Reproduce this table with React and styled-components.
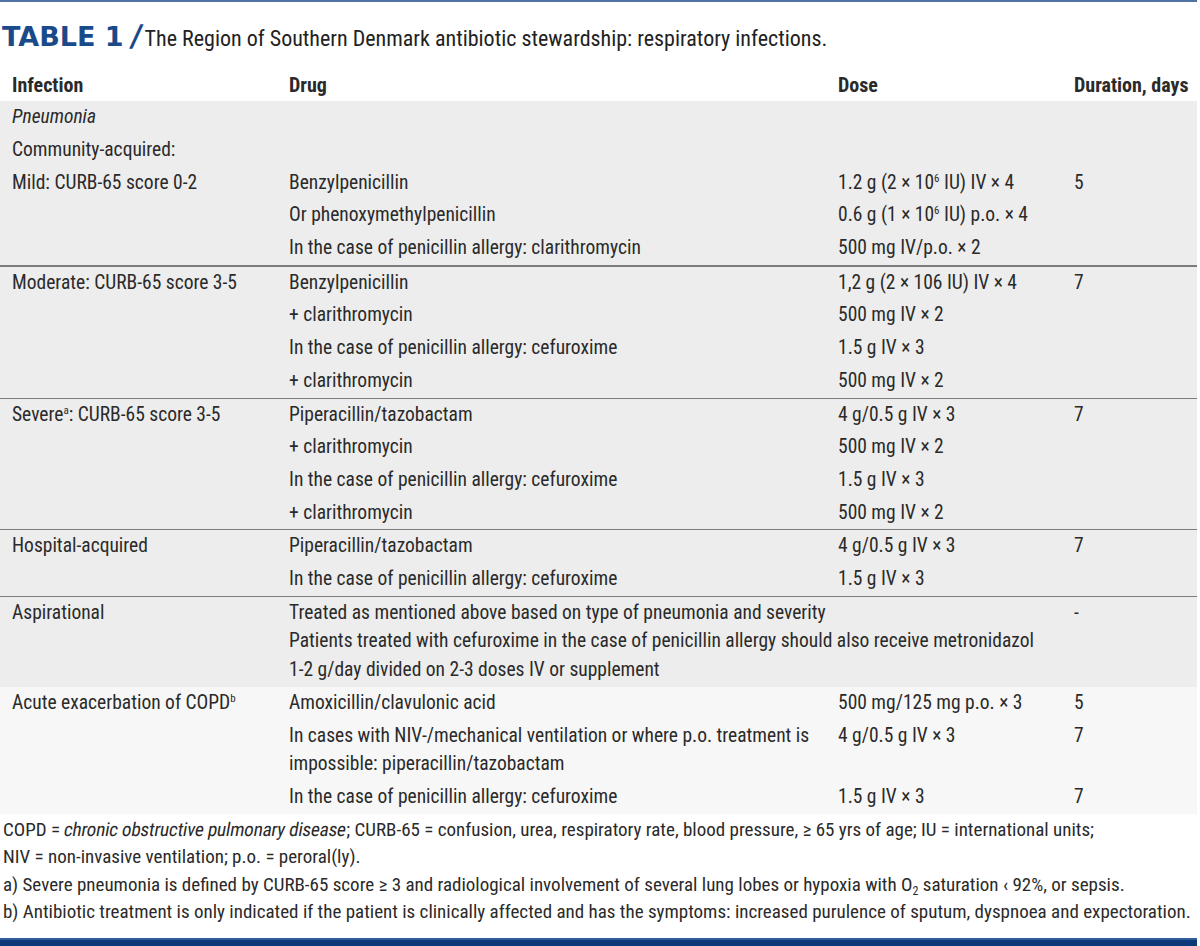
import React from 'react';
import styled, { createGlobalStyle } from 'styled-components';

const GlobalStyle = createGlobalStyle`
  html, body {
    margin: 0;
    padding: 0;
    background: #ffffff;
  }
`;

const Page = styled.div`
  width: 1197px;
  border-top: 2px solid #4f74a4;
  font-family: "Roboto", "DejaVu Sans Condensed", sans-serif;
  font-stretch: 75%;
  font-size: 19.5px;
  color: #2a2a2a;
`;

const TitleBar = styled.div`
  display: flex;
  align-items: baseline;
  margin-top: 19px;
  height: 30px;
  line-height: 30px;
  padding-left: 2px;
  white-space: nowrap;
`;

const TableLabel = styled.span`
  font-family: "DejaVu Sans", sans-serif;
  font-stretch: normal;
  font-weight: 700;
  font-size: 27px;
  color: #1b4a8a;
`;

const Slash = styled.span`
  font-family: "DejaVu Sans", sans-serif;
  font-stretch: normal;
  font-weight: 700;
  font-size: 30px;
  color: #1b4a8a;
  margin: 0 3px 0 7px;
  transform: skewX(-8deg);
  display: inline-block;
`;

const TitleText = styled.span`
  font-size: 22px;
  color: #222;
`;

const Line = styled.div`
  display: grid;
  grid-template-columns: 277px 549px 236px 1fr;
  padding: 2px 0 2px 12px;
  line-height: 28.7px;
  white-space: nowrap;
`;

const HeaderLine = styled(Line)`
  margin-top: 17.5px;
  font-size: 20px;
  font-weight: 700;
`;

const Group = styled.div`
  background: ${({ $light }) => ($light ? '#f7f7f7' : '#ededed')};
  border-bottom: ${({ $border }) => ($border ? `${$border}px solid #7d7d7d` : 'none')};
`;

const Cell = styled.div`
  grid-column: ${({ $span }) => ($span ? `span ${$span}` : 'auto')};
  font-style: ${({ $italic }) => ($italic ? 'italic' : 'normal')};
`;

const Sup = styled.sup`
  font-size: 11px;
  line-height: 0;
  vertical-align: 7px;
`;

const Sub = styled.sub`
  font-size: 12px;
  line-height: 0;
  vertical-align: -4px;
`;

const Footer = styled.div`
  padding: 2px 0 0 3px;
  line-height: 27.5px;
  font-size: 19px;
  white-space: nowrap;
`;

/* condensed upright face slanted, the italic face of the font has no narrow width */
const Slanted = styled.span`
  display: inline-block;
  transform: skewX(-10deg);
  letter-spacing: -0.2px;
`;

const BottomBar = styled.div`
  margin-top: 12px;
  height: 7px;
  border-top: 2px solid #2f5f9d;
  background: #0c3877;
`;

const groups = [
  {
    border: 2,
    lines: [
      [{ text: 'Pneumonia', italic: true }],
      ['Community-acquired:'],
      ['Mild: CURB-65 score 0-2', 'Benzylpenicillin', <>1.2 g (2 × 10<Sup>6</Sup> IU) IV × 4</>, '5'],
      ['', 'Or phenoxymethylpenicillin', <>0.6 g (1 × 10<Sup>6</Sup> IU) p.o. × 4</>, ''],
      ['', 'In the case of penicillin allergy: clarithromycin', '500 mg IV/p.o. × 2', ''],
    ],
  },
  {
    border: 1,
    lines: [
      ['Moderate: CURB-65 score 3-5', 'Benzylpenicillin', '1,2 g (2 × 106 IU) IV × 4', '7'],
      ['', '+ clarithromycin', '500 mg IV × 2', ''],
      ['', 'In the case of penicillin allergy: cefuroxime', '1.5 g IV × 3', ''],
      ['', '+ clarithromycin', '500 mg IV × 2', ''],
    ],
  },
  {
    border: 1,
    lines: [
      [<>Severe<Sup>a</Sup>: CURB-65 score 3-5</>, 'Piperacillin/tazobactam', '4 g/0.5 g IV × 3', '7'],
      ['', '+ clarithromycin', '500 mg IV × 2', ''],
      ['', 'In the case of penicillin allergy: cefuroxime', '1.5 g IV × 3', ''],
      ['', '+ clarithromycin', '500 mg IV × 2', ''],
    ],
  },
  {
    border: 1,
    lines: [
      ['Hospital-acquired', 'Piperacillin/tazobactam', '4 g/0.5 g IV × 3', '7'],
      ['', 'In the case of penicillin allergy: cefuroxime', '1.5 g IV × 3', ''],
    ],
  },
];

const renderLine = (cells, key) => (
  <Line key={key}>
    {cells.map((c, i) =>
      c && typeof c === 'object' && c.text ? (
        <Cell key={i} $italic={c.italic}>{c.text}</Cell>
      ) : (
        <Cell key={i}>{c}</Cell>
      )
    )}
  </Line>
);

export default function App() {
  return (
    <>
      <GlobalStyle />
      <Page>
        <TitleBar>
          <TableLabel>TABLE 1</TableLabel>
          <Slash>/</Slash>
          <TitleText>The Region of Southern Denmark antibiotic stewardship: respiratory infections.</TitleText>
        </TitleBar>

        <HeaderLine>
          <Cell>Infection</Cell>
          <Cell>Drug</Cell>
          <Cell>Dose</Cell>
          <Cell>Duration, days</Cell>
        </HeaderLine>

        {groups.map((g, gi) => (
          <Group key={gi} $border={g.border}>
            {g.lines.map((l, li) => renderLine(l, li))}
          </Group>
        ))}

        <Group>
          <Line>
            <Cell>Aspirational</Cell>
            <Cell $span={2}>
              Treated as mentioned above based on type of pneumonia and severity
              <br />
              Patients treated with cefuroxime in the case of penicillin allergy should also receive metronidazol
              <br />
              1-2 g/day divided on 2-3 doses IV or supplement
            </Cell>
            <Cell>-</Cell>
          </Line>
        </Group>

        <Group $light>
          <Line>
            <Cell>Acute exacerbation of COPD<Sup>b</Sup></Cell>
            <Cell>Amoxicillin/clavulonic acid</Cell>
            <Cell>500 mg/125 mg p.o. × 3</Cell>
            <Cell>5</Cell>
          </Line>
          <Line>
            <Cell />
            <Cell>
              In cases with NIV-/mechanical ventilation or where p.o. treatment is
              <br />
              impossible: piperacillin/tazobactam
            </Cell>
            <Cell>4 g/0.5 g IV × 3</Cell>
            <Cell>7</Cell>
          </Line>
          <Line>
            <Cell />
            <Cell>In the case of penicillin allergy: cefuroxime</Cell>
            <Cell>1.5 g IV × 3</Cell>
            <Cell>7</Cell>
          </Line>
        </Group>

        <Footer>
          <div>
            COPD = <Slanted>chronic obstructive pulmonary disease</Slanted>; CURB-65 = confusion, urea, respiratory
            rate, blood pressure, ≥ 65 yrs of age; IU = international units;
          </div>
          <div>NIV = non-invasive ventilation; p.o. = peroral(ly).</div>
          <div>
            a) Severe pneumonia is defined by CURB-65 score ≥ 3 and radiological involvement of several lung lobes or
            hypoxia with O<Sub>2</Sub> saturation ‹ 92%, or sepsis.
          </div>
          <div>
            b) Antibiotic treatment is only indicated if the patient is clinically affected and has the symptoms:
            increased purulence of sputum, dyspnoea and expectoration.
          </div>
        </Footer>
        <BottomBar />
      </Page>
    </>
  );
}
